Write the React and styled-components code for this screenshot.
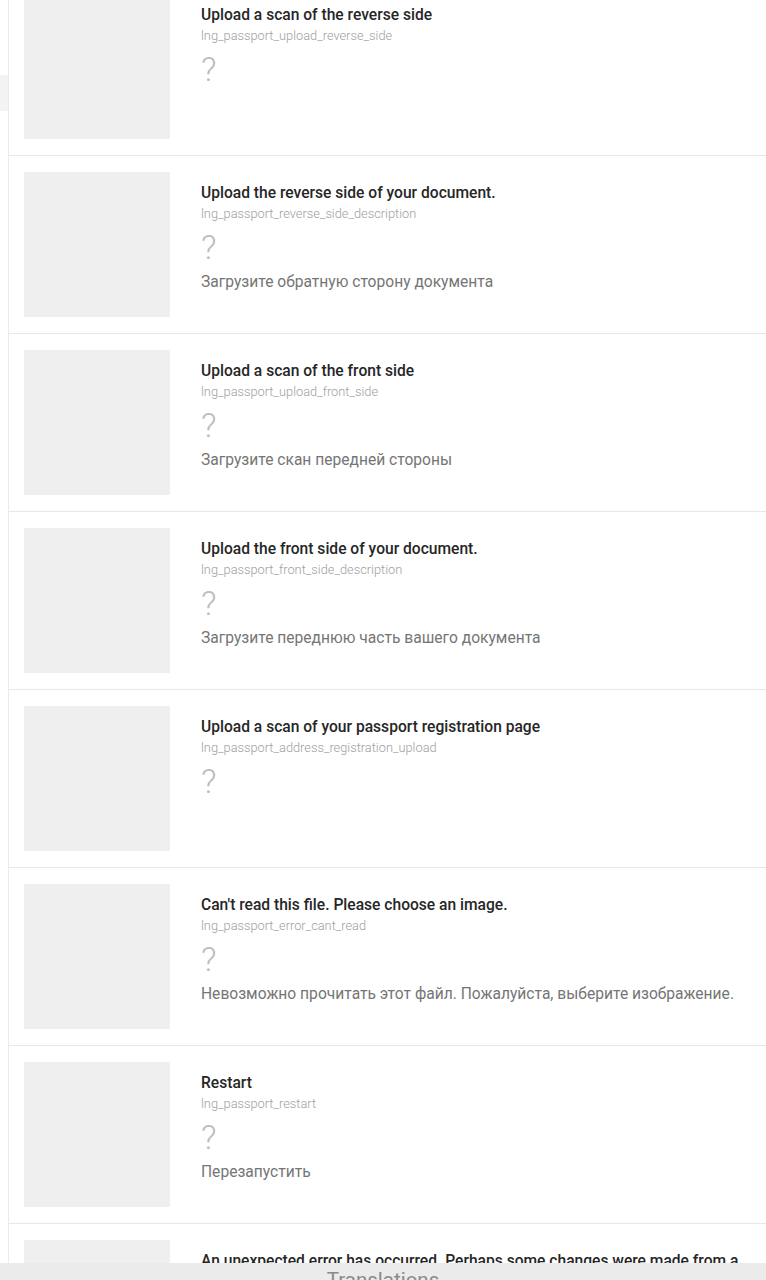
import styled, { createGlobalStyle } from "styled-components";

const rows = [
  {
    title: "Upload a scan of the reverse side",
    key: "lng_passport_upload_reverse_side",
  },
  {
    title: "Upload the reverse side of your document.",
    key: "lng_passport_reverse_side_description",
    value: "Загрузите обратную сторону документа",
  },
  {
    title: "Upload a scan of the front side",
    key: "lng_passport_upload_front_side",
    value: "Загрузите скан передней стороны",
  },
  {
    title: "Upload the front side of your document.",
    key: "lng_passport_front_side_description",
    value: "Загрузите переднюю часть вашего документа",
  },
  {
    title: "Upload a scan of your passport registration page",
    key: "lng_passport_address_registration_upload",
  },
  {
    title: "Can't read this file. Please choose an image.",
    key: "lng_passport_error_cant_read",
    value: "Невозможно прочитать этот файл. Пожалуйста, выберите изображение.",
  },
  {
    title: "Restart",
    key: "lng_passport_restart",
    value: "Перезапустить",
  },
  {
    title:
      "An unexpected error has occurred. Perhaps some changes were made from a different device. Please restart.",
    key: "lng_passport_error_unexpected",
    value: "Произошла непредвиденная ошибка.",
  },
];

const App = () => {
  return (
    <>
      <Global />
      <Page>
        <Side>
          <SideItem />
        </Side>
        <List>
          {rows.map((r) => (
            <Row key={r.key}>
              <Thumb />
              <Text>
                <Title>{r.title}</Title>
                <Key>{r.key}</Key>
                <Question>?</Question>
                {r.value && <Value>{r.value}</Value>}
              </Text>
            </Row>
          ))}
        </List>
      </Page>
      <TabBar>
        <span>Translations</span>
      </TabBar>
    </>
  );
};

const Global = createGlobalStyle`
  html, body {
    margin: 0;
    padding: 0;
    background: #ffffff;
    font-family: Roboto, "Noto Sans", sans-serif;
    height: 1280px;
    overflow: hidden;
  }
`;

const Page = styled.div`
  display: flex;
  height: 1280px;
  overflow: hidden;
`;

const Side = styled.div`
  width: 8px;
  flex-shrink: 0;
  border-right: 1px solid #ebebeb;
`;

const SideItem = styled.div`
  margin-top: 75px;
  height: 36px;
  background: #f3f3f3;
`;

const List = styled.div`
  flex: 1;
  margin-top: -22px;
`;

const Row = styled.div`
  display: flex;
  height: 145px;
  padding: 16px 20px 16px 15px;
  border-bottom: 1px solid #e8e8e8;
`;

const Thumb = styled.div`
  width: 146px;
  height: 145px;
  flex-shrink: 0;
  background: #efefef;
`;

const Text = styled.div`
  margin-left: 31px;
  padding-top: 11px;
  display: flex;
  flex-direction: column;
`;

const Title = styled.div`
  font-size: 15.6px;
  font-weight: 500;
  line-height: 20px;
  color: #262626;
`;

const Key = styled.div`
  margin-top: 3px;
  font-size: 12.8px;
  font-weight: 300;
  line-height: 16px;
  color: #a0a0a0;
`;

const Question = styled.div`
  margin-top: 5px;
  font-size: 34px;
  font-weight: 300;
  line-height: 40px;
  color: #bdbdbd;
`;

const Value = styled.div`
  margin-top: 5px;
  font-size: 15.6px;
  line-height: 20px;
  color: #757575;
`;

const TabBar = styled.div`
  position: fixed;
  left: 0;
  right: 0;
  bottom: 0;
  height: 17px;
  overflow: hidden;
  background: #ebebeb;
  text-align: center;

  span {
    display: block;
    padding-top: 5px;
    font-size: 20.5px;
    line-height: 24px;
    color: #8a8a8a;
  }
`;

export default App;
